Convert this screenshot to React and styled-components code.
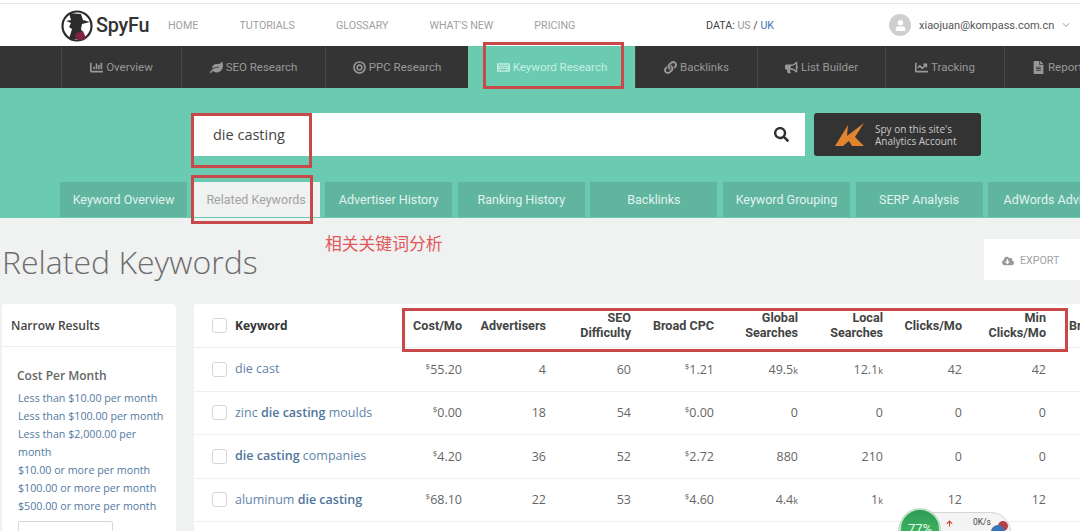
import React from 'react';
import styled, { createGlobalStyle } from 'styled-components';
import {
  FaArrowUp,
  FaBullhorn,
  FaBullseye,
  FaChartBar,
  FaChartLine,
  FaChevronDown,
  FaCloudDownloadAlt,
  FaFileAlt,
  FaKeyboard,
  FaLeaf,
  FaLink,
  FaSearch,
  FaUser,
} from 'react-icons/fa';

const GlobalStyle = createGlobalStyle`
  html, body {
    margin: 0;
    padding: 0;
    background: #f0f1f1;
  }
  * {
    box-sizing: border-box;
  }
`;

const headerLinks = ['HOME', 'TUTORIALS', 'GLOSSARY', "WHAT'S NEW", 'PRICING'];

const navItems = [
  { label: 'Overview', icon: FaChartBar, width: 120 },
  { label: 'SEO Research', icon: FaLeaf, width: 144 },
  { label: 'PPC Research', icon: FaBullseye, width: 143 },
  { label: 'Keyword Research', icon: FaKeyboard, width: 167, active: true },
  { label: 'Backlinks', icon: FaLink, width: 122 },
  { label: 'List Builder', icon: FaBullhorn, width: 128 },
  { label: 'Tracking', icon: FaChartLine, width: 119 },
  { label: 'Reports', icon: FaFileAlt, width: 120, left: true },
];

const tabs = [
  'Keyword Overview',
  'Related Keywords',
  'Advertiser History',
  'Ranking History',
  'Backlinks',
  'Keyword Grouping',
  'SERP Analysis',
  'AdWords Advisor',
];

const filters = [
  'Less than $10.00 per month',
  'Less than $100.00 per month',
  'Less than $2,000.00 per month',
  '$10.00 or more per month',
  '$100.00 or more per month',
  '$500.00 or more per month',
];

const rows = [
  { parts: [['die cast', false]], cost: '55.20', adv: 4, seo: 60, cpc: '1.21', global: ['49.5', 'k'], local: ['12.1', 'k'], clicks: 42, min: 42 },
  { parts: [['zinc ', false], ['die casting', true], [' moulds', false]], cost: '0.00', adv: 18, seo: 54, cpc: '0.00', global: ['0'], local: ['0'], clicks: 0, min: 0 },
  { parts: [['die casting', true], [' companies', false]], cost: '4.20', adv: 36, seo: 52, cpc: '2.72', global: ['880'], local: ['210'], clicks: 0, min: 0 },
  { parts: [['aluminum ', false], ['die casting', true]], cost: '68.10', adv: 22, seo: 53, cpc: '4.60', global: ['4.4', 'k'], local: ['1', 'k'], clicks: 12, min: 12 },
];

const Spy = () => (
  <svg width="34" height="34" viewBox="0 0 34 34">
    <circle cx="17" cy="18" r="14.5" fill="#fff" stroke="#2d2a2b" strokeWidth="2.2" />
    <path d="M9 5l12 1 2 6 7 2-8 2-1 5 5 10H9l3-10-3-2 2-4-5-2 5-1z" fill="#2d2a2b" />
    <path d="M16 25l7-2 3 7-6 3-5-3z" fill="#7c2440" />
  </svg>
);

const AnalyticsMark = () => (
  <svg width="30" height="26" viewBox="0 0 30 26">
    <path d="M0 24L13 3l-1 11L29 1l-9 14 9 9H17l-3-5-6 5z" fill="#e2842f" />
  </svg>
);

const App = () => (
  <Page>
    <GlobalStyle />
    <Header>
      <Logo>
        <Spy />
        <LogoText>SpyFu</LogoText>
      </Logo>
      <HeaderLinks>
        {headerLinks.map((link) => (
          <HeaderLink key={link}>{link}</HeaderLink>
        ))}
      </HeaderLinks>
      <DataSwitch>
        DATA: <Muted>US</Muted> / <Blue>UK</Blue>
      </DataSwitch>
      <Account>
        <Avatar>
          <FaUser size={11} color="#fff" />
        </Avatar>
        <span>xiaojuan@kompass.com.cn</span>
        <FaChevronDown size={8} color="#c4c4c4" />
      </Account>
    </Header>

    <Nav>
      {navItems.map((item) => (
        <NavItem key={item.label} $width={item.width} $active={item.active} $left={item.left}>
          <item.icon size={13} />
          {item.label}
        </NavItem>
      ))}
    </Nav>

    <Hero>
      <SearchRow>
        <SearchBox>
          <SearchText>die casting</SearchText>
          <FaSearch size={15} color="#2f2f2f" />
        </SearchBox>
        <AnalyticsButton>
          <AnalyticsMark />
          <span>
            Spy on this site's
            <br />
            Analytics Account
          </span>
        </AnalyticsButton>
      </SearchRow>
      <Tabs>
        {tabs.map((tab, i) => (
          <Tab key={tab} $active={i === 1}>
            {tab}
          </Tab>
        ))}
      </Tabs>
    </Hero>

    <TitleRow>
      <Title>Related Keywords</Title>
      <ExportButton>
        <FaCloudDownloadAlt size={12} color="#999" />
        EXPORT
      </ExportButton>
    </TitleRow>

    <Body>
      <Sidebar>
        <SidebarHead>Narrow Results</SidebarHead>
        <FilterGroup>
          <FilterTitle>Cost Per Month</FilterTitle>
          {filters.map((f) => (
            <FilterLink key={f}>{f}</FilterLink>
          ))}
          <ShowMore>SHOW MORE</ShowMore>
        </FilterGroup>
      </Sidebar>

      <Results>
        <HeadRow>
          <KeywordCell>
            <Check />
            <strong>Keyword</strong>
          </KeywordCell>
          <HeadCell>Cost/Mo</HeadCell>
          <HeadCell>Advertisers</HeadCell>
          <HeadCell>SEO<br />Difficulty</HeadCell>
          <HeadCell>Broad CPC</HeadCell>
          <HeadCell>Global<br />Searches</HeadCell>
          <HeadCell>Local<br />Searches</HeadCell>
          <HeadCell>Clicks/Mo</HeadCell>
          <HeadCell>Min<br />Clicks/Mo</HeadCell>
          <ExtraHead>Broad</ExtraHead>
        </HeadRow>
        {rows.map((row) => (
          <Row key={row.cost}>
            <KeywordCell>
              <Check />
              <KeywordLink>
                {row.parts.map(([text, bold]) => (bold ? <b key={text}>{text}</b> : text))}
              </KeywordLink>
            </KeywordCell>
            <Cell><Small>$</Small>{row.cost}</Cell>
            <Cell>{row.adv}</Cell>
            <Cell>{row.seo}</Cell>
            <Cell><Small>$</Small>{row.cpc}</Cell>
            <Cell>{row.global[0]}<Unit>{row.global[1]}</Unit></Cell>
            <Cell>{row.local[0]}<Unit>{row.local[1]}</Unit></Cell>
            <Cell>{row.clicks}</Cell>
            <Cell>{row.min}</Cell>
          </Row>
        ))}
      </Results>
    </Body>

    <Annotation $x={483} $y={42} $w={141} $h={47} />
    <Annotation $x={191} $y={113} $w={121} $h={55} />
    <Annotation $x={191} $y={175} $w={122} $h={49} />
    <Annotation $x={402} $y={308} $w={666} $h={44} />
    <AnnotationText>相关关键词分析</AnnotationText>

    <SpeedWidget>
      <SpeedBall>77%</SpeedBall>
      <SpeedArrow>
        <FaArrowUp size={7} color="#c7403a" />
      </SpeedArrow>
      <SpeedText>0K/s</SpeedText>
      <SpeedDot />
    </SpeedWidget>
  </Page>
);

const Page = styled.div`
  position: relative;
  width: 1080px;
  height: 531px;
  overflow: hidden;
  background: #f0f1f1;
  font-family: 'Roboto', 'Liberation Sans', sans-serif;
`;

const Header = styled.header`
  display: flex;
  align-items: center;
  height: 46px;
  margin-top: 0;
  padding: 3px 0 0 60px;
  background: #fff;
  border-top: 1px solid #fff;
  box-shadow: inset 0 2px 0 #fff, inset 0 3px 0 #e8e8e8;
`;

const Logo = styled.div`
  display: flex;
  align-items: center;
  width: 108px;
  gap: 2px;
`;

const LogoText = styled.span`
  font-family: 'Roboto', sans-serif;
  font-size: 21px;
  font-weight: 500;
  letter-spacing: -0.2px;
  color: #333;
  transform: scaleX(0.94);
  transform-origin: left center;
`;

const HeaderLinks = styled.nav`
  display: flex;
  gap: 41px;
  width: 538px;
`;

const HeaderLink = styled.a`
  font-size: 10.7px;
  color: #a0a0a0;
`;

const DataSwitch = styled.div`
  width: 183px;
  font-size: 10.7px;
  color: #444;
`;

const Muted = styled.span`
  color: #9a9a9a;
`;

const Blue = styled.span`
  color: #3d72ac;
`;

const Account = styled.div`
  display: flex;
  align-items: center;
  gap: 8px;
  font-size: 11px;
  color: #555;
`;

const Avatar = styled.div`
  display: flex;
  align-items: center;
  justify-content: center;
  width: 22px;
  height: 22px;
  border-radius: 50%;
  background: #cfcfcf;
`;

const Nav = styled.nav`
  display: flex;
  height: 42px;
  padding-left: 61px;
  background: linear-gradient(#343434, #343434) 0 0 / 468px 100% no-repeat,
    linear-gradient(#343434, #343434) 635px 0 / 445px 100% no-repeat, #6bcbb1;
`;

const NavItem = styled.a`
  display: flex;
  flex: none;
  align-items: center;
  justify-content: ${(p) => (p.$left ? 'flex-start' : 'center')};
  gap: 3px;
  width: ${(p) => p.$width}px;
  padding-left: ${(p) => (p.$left ? '27px' : '0')};
  font-size: 11.5px;
  color: ${(p) => (p.$active ? '#c5eee1' : '#989898')};
  border-left: 1px solid ${(p) => (p.$active ? 'transparent' : '#464646')};
`;

const Hero = styled.section`
  height: 130px;
  background: #6bcbb1;
`;

const SearchRow = styled.div`
  display: flex;
  gap: 9px;
  padding: 25px 0 0 193px;
`;

const SearchBox = styled.div`
  display: flex;
  align-items: center;
  justify-content: space-between;
  width: 612px;
  height: 43px;
  padding: 0 16px 0 20px;
  background: #fff;
`;

const SearchText = styled.span`
  font-family: 'Open Sans', sans-serif;
  font-size: 14.5px;
  color: #444;
`;

const AnalyticsButton = styled.a`
  display: flex;
  align-items: center;
  gap: 10px;
  width: 167px;
  height: 43px;
  padding-left: 21px;
  border-radius: 3px;
  background: #333;
  font-family: 'Open Sans', sans-serif;
  font-size: 10px;
  line-height: 12px;
  color: #c9c9c9;
`;

const Tabs = styled.div`
  display: flex;
  gap: 5.6px;
  width: 1080px;
  margin-top: 26px;
  padding-left: 60px;
  overflow: hidden;
`;

const Tab = styled.a`
  display: flex;
  flex: none;
  align-items: center;
  justify-content: center;
  width: 127px;
  height: 35px;
  white-space: nowrap;
  font-size: 12.5px;
  color: ${(p) => (p.$active ? '#a3a3a3' : '#e2f3ee')};
  background: ${(p) => (p.$active ? '#f0f1f1' : '#5fb59e')};
`;

const TitleRow = styled.div`
  display: flex;
  justify-content: space-between;
  height: 86px;
  padding-left: 2px;
`;

const Title = styled.h1`
  margin: 24px 0 0;
  font-family: 'Open Sans', sans-serif;
  font-size: 32px;
  font-weight: 300;
  line-height: 40px;
  color: #6d6d6d;
`;

const ExportButton = styled.a`
  display: flex;
  align-items: center;
  gap: 6px;
  width: 96px;
  height: 41px;
  margin-top: 21px;
  padding: 2px 0 0 18px;
  background: #fff;
  font-size: 10.7px;
  color: #a2a2a2;
`;

const Body = styled.div`
  display: flex;
  gap: 18px;
  padding-left: 2px;
`;

const Sidebar = styled.aside`
  flex: none;
  width: 174px;
  height: 240px;
  border-radius: 4px 4px 0 0;
  background: #fff;
  font-family: 'Open Sans', sans-serif;
`;

const SidebarHead = styled.div`
  display: flex;
  align-items: center;
  height: 43px;
  padding-left: 9px;
  border-bottom: 1px solid #ececec;
  font-size: 12px;
  font-weight: 600;
  color: #444;
`;

const FilterGroup = styled.div`
  padding: 20px 10px 0 15px;
`;

const FilterTitle = styled.div`
  margin-bottom: 4px;
  font-size: 12px;
  font-weight: 600;
  line-height: 18px;
  color: #666;
`;

const FilterLink = styled.a`
  display: block;
  margin-left: 1px;
  font-size: 10.7px;
  line-height: 18px;
  color: #52799f;
`;

const ShowMore = styled.div`
  width: 95px;
  height: 24px;
  margin: 6px 0 0 1px;
  padding-top: 6px;
  border: 1px solid #d8d8d8;
  border-radius: 2px;
  text-align: center;
  font-size: 10px;
  color: #999;
`;

const Results = styled.main`
  flex: none;
  width: 886px;
  background: #fff;
  border-radius: 4px 0 0 0;
  font-family: 'Open Sans', sans-serif;
`;

const columns = '184px 84px 84px 85px 83px 84px 85px 79px 84px 34px';

const HeadRow = styled.div`
  display: grid;
  grid-template-columns: ${columns};
  align-items: center;
  height: 44px;
  border-bottom: 1px solid #ececec;
`;

const Row = styled.div`
  display: grid;
  grid-template-columns: ${columns};
  align-items: center;
  height: 43.5px;
  border-bottom: 1px solid #f0f0f0;
`;

const KeywordCell = styled.div`
  display: flex;
  align-items: center;
  gap: 8px;
  padding-left: 18px;
  white-space: nowrap;
  font-size: 12px;
  color: #333;
`;

const Check = styled.span`
  flex: none;
  width: 15px;
  height: 15px;
  border: 1px solid #d6d6d6;
  border-radius: 3px;
  background: #fff;
`;

const KeywordLink = styled.a`
  margin-top: -1px;
  font-size: 12.5px;
  color: #5f84a8;

  b {
    font-weight: 600;
    color: #4f759d;
  }
`;

const HeadCell = styled.div`
  margin-top: -1px;
  text-align: right;
  font-family: 'Roboto', sans-serif;
  font-size: 12.6px;
  font-weight: 700;
  line-height: 15px;
  color: #444;
`;

const ExtraHead = styled(HeadCell)`
  padding-left: 23px;
  overflow: hidden;
  text-align: left;
  white-space: nowrap;
`;

const Cell = styled.div`
  text-align: right;
  font-size: 12.5px;
  color: #666;
`;

const Small = styled.sup`
  font-size: 8px;
  line-height: 0;
`;

const Unit = styled.span`
  font-size: 9px;
`;

const Annotation = styled.div`
  position: absolute;
  left: ${(p) => p.$x}px;
  top: ${(p) => p.$y}px;
  width: ${(p) => p.$w}px;
  height: ${(p) => p.$h}px;
  border: 3px solid #c9484a;
`;

const AnnotationText = styled.div`
  position: absolute;
  left: 325px;
  top: 233px;
  font-family: 'Noto Sans CJK SC', sans-serif;
  font-size: 16.8px;
  line-height: 20px;
  color: #e0585a;
`;

const SpeedWidget = styled.div`
  position: absolute;
  left: 898px;
  top: 512px;
  display: flex;
  align-items: flex-start;
  width: 113px;
  height: 40px;
  border: 1px solid #d4d4d4;
  border-radius: 20px;
  background: #f4f4f4;
`;

const SpeedBall = styled.div`
  flex: none;
  width: 42px;
  height: 42px;
  margin-top: -5px;
  padding-top: 11px;
  border: 2px solid #bfe3c9;
  border-radius: 50%;
  background: linear-gradient(#2f9a55, #46c268);
  text-align: center;
  font-size: 13px;
  color: #e8fff0;
`;

const SpeedArrow = styled.span`
  margin: 7px 0 0 5px;
  line-height: 0;
`;

const SpeedText = styled.span`
  margin: 4px 0 0 20px;
  font-size: 8.5px;
  color: #444;
`;

const SpeedDot = styled.span`
  position: absolute;
  right: 5px;
  top: 12px;
  width: 14px;
  height: 14px;
  border-radius: 50%;
  background: #3d74b8;
  box-shadow: 5px -6px 0 -2px #b5404a;
`;

export default App;
